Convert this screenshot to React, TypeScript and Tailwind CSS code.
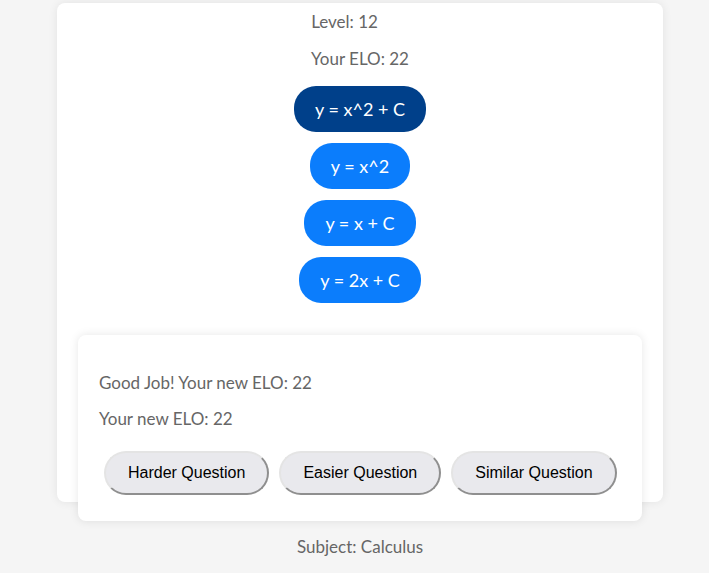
const answers = [
  { label: "y = x^2 + C", selected: true },
  { label: "y = x^2", selected: false },
  { label: "y = x + C", selected: false },
  { label: "y = 2x + C", selected: false },
];

const actions = ["Harder Question", "Easier Question", "Similar Question"];

export default function App() {
  return (
    <div className="min-h-screen bg-[#f5f5f5] flex flex-col items-center pt-[3px] pl-[11px] font-['Lato','Open_Sans',sans-serif] text-[#666]">
      {/* Question card */}
      <div className="w-[606px] h-[499px] bg-white rounded-lg shadow-[0_0_10px_rgba(0,0,0,0.08)] flex flex-col items-center">
        <p className="mt-[7px] mr-[31px] leading-6 text-[17px]">Level: 12</p>
        <p className="mt-[13px] leading-6 text-[17px]">Your ELO: 22</p>

        <div className="mt-[15px] flex flex-col items-center gap-[11px]">
          {answers.map((a) => (
            <button
              key={a.label}
              className={`h-[46px] px-[21px] rounded-[22px] text-white text-[18px] ${
                a.selected ? "bg-[#00408a]" : "bg-[#0b7dfc]"
              }`}
            >
              {a.label}
            </button>
          ))}
        </div>

        {/* Feedback card */}
        <div className="mt-[32px] w-[564px] shrink-0 bg-white rounded-lg shadow-[0_0_10px_rgba(0,0,0,0.1)] pl-[21px] pt-[36px] pb-[26px]">
          <p className="leading-6 text-[17px]">Good Job! Your new ELO: 22</p>
          <p className="mt-[12px] leading-6 text-[17px]">Your new ELO: 22</p>
          <div className="mt-[20px] flex">
            {actions.map((t) => (
              <button
                key={t}
                className="mx-[5px] h-[44px] px-[22px] rounded-full bg-[#e9e9ed] border-2 border-t-[#e4e4e4] border-l-[#e4e4e4] border-r-[#8f8f8f] border-b-[#8f8f8f] text-black text-[16px] font-['Liberation_Sans',Arial,sans-serif]"
              >
                {t}
              </button>
            ))}
          </div>
        </div>
      </div>

      <p className="mt-[33px] leading-6 text-[17px]">Subject: Calculus</p>
    </div>
  );
}
